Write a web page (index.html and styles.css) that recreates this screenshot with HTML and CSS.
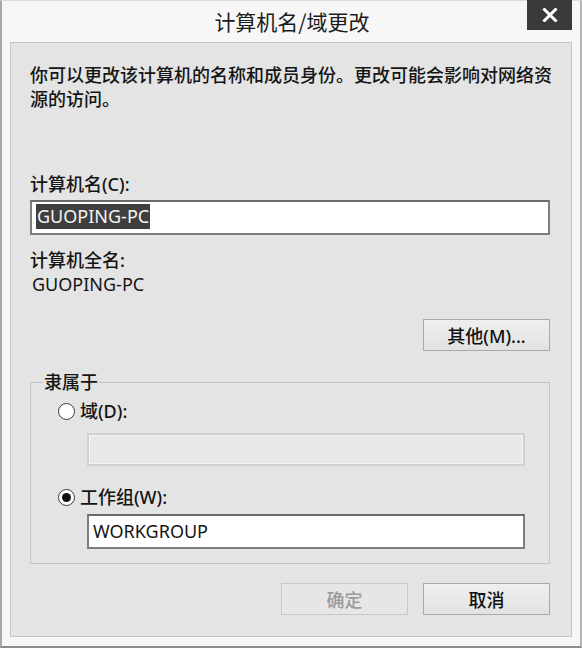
FILE: index.html
```html
<!DOCTYPE html>
<html lang="zh-CN">
<head>
<meta charset="utf-8">
<title>计算机名/域更改</title>
<link rel="stylesheet" href="styles.css">
</head>
<body>
<div class="window">
  <div class="titlebar">
    <div></div>
    <div class="title">计算机名/域更改</div>
    <div class="close"><svg width="16" height="14" viewBox="0 0 16 14"><path d="M2.5 1.5 L13.5 12.5 M13.5 1.5 L2.5 12.5" stroke="#fff" stroke-width="3" stroke-linecap="square"/></svg></div>
  </div>
  <div class="panel">
    <p class="desc"><span class="line">你可以更改该计算机的名称和成员身份。更改可能会影响对网络资</span><span class="line">源的访问。</span></p>
    <div class="label name-label">计算机名(C):</div>
    <div class="field field-main"><span class="sel">GUOPING-PC</span></div>
    <div class="label full-label">计算机全名:</div>
    <div class="value">GUOPING-PC</div>
    <div class="row-right"><div class="btn">其他(M)...</div></div>
    <fieldset class="group">
      <legend>隶属于</legend>
      <div class="radio-row"><span class="radio"></span><span>域(D):</span></div>
      <div class="field field-disabled"></div>
      <div class="radio-row radio-row2"><span class="radio checked"></span><span>工作组(W):</span></div>
      <div class="field field-wg">WORKGROUP</div>
    </fieldset>
    <div class="actions">
      <div class="btn btn-disabled">确定</div>
      <div class="btn">取消</div>
    </div>
  </div>
</div>
</body>
</html>
```
FILE: styles.css
```css
html, body {
  margin: 0;
  padding: 0;
  background: #ffffff;
}
body {
  font-family: "Noto Sans", "Noto Sans CJK SC", sans-serif;
  font-weight: 500;
  color: #151515;
}
.window {
  width: 582px;
  height: 648px;
  box-sizing: border-box;
  border-left: 2px solid #a8a8a8;
  border-right: 2px solid #b4b4b4;
  border-top: 1px solid #dcdcdc;
  border-bottom: 2px solid #8c8c8c;
  background: #f7f7f7;
  display: flex;
  flex-direction: column;
}
.titlebar {
  height: 41px;
  display: grid;
  grid-template-columns: 1fr auto 1fr;
  align-items: start;
}
.title {
  font-family: "Noto Sans CJK SC", sans-serif;
  font-size: 21px;
  font-weight: 400;
  line-height: 40px;
  color: #1c1c1c;
  padding-left: 2px;
}
.close {
  justify-self: end;
  margin-right: 8px;
  margin-top: -1px;
  width: 45px;
  height: 30px;
  background: #3a3a3a;
  display: flex;
  align-items: center;
  justify-content: center;
}
.panel {
  margin-left: 8px;
  width: 562px;
  height: 595px;
  box-sizing: border-box;
  background: #e4e4e4;
  border: 1px solid #c4c4c4;
  padding: 19px 21px 0 19px;
  font-size: 18px;
}
.desc {
  margin: 0 -10px 0 0;
  line-height: 24px;
  font-family: "Noto Sans CJK SC", sans-serif;
  font-size: 18px;
}
.desc .line {
  display: block;
  white-space: nowrap;
}
.label {
  line-height: 24px;
}
.name-label {
  margin-top: 62px;
}
.field {
  box-sizing: border-box;
  background: #ffffff;
  border: 2px solid #7d7d7d;
  border-top-color: #6a6a6a;
  font-size: 18px;
  font-weight: 400;
  line-height: 24px;
}
.field-main {
  margin-top: 4px;
  height: 35px;
  padding: 2px 4px;
}
.sel {
  background: #3e3e3e;
  color: #f4f4f4;
  display: inline-block;
  padding: 0 1px;
  line-height: 25px;
}
.full-label {
  margin-top: 13px;
}
.value {
  line-height: 24px;
  padding-left: 2px;
  font-weight: 400;
}
.row-right {
  display: flex;
  justify-content: flex-end;
  margin-top: 23px;
}
.btn {
  width: 127px;
  height: 32px;
  box-sizing: border-box;
  border: 1px solid #a9a9a9;
  background: linear-gradient(#efefef, #e2e2e2);
  display: flex;
  align-items: center;
  justify-content: center;
  font-size: 18px;
  color: #111;
}
.btn-disabled {
  border-color: #c9c9c9;
  background: #e6e6e6;
  color: #9b9b9b;
}
.group {
  margin: 20px 0 0 0;
  padding: 6px 24px 12px 28px;
  border: 1px solid #c4c4c4;
  height: 193px;
  box-sizing: border-box;
}
.group legend {
  padding: 0 1px;
  margin-left: -16px;
  line-height: 22px;
  font-size: 18px;
}
.radio-row {
  display: flex;
  align-items: center;
  gap: 5px;
  line-height: 24px;
}
.radio {
  width: 17px;
  height: 17px;
  margin-left: -1px;
  border-radius: 50%;
  box-sizing: border-box;
  border: 1.5px solid #3a3a3a;
  background: #fff;
  display: flex;
  align-items: center;
  justify-content: center;
}
.radio.checked::after {
  content: "";
  width: 9px;
  height: 9px;
  border-radius: 50%;
  background: #111;
}
.field-disabled {
  margin: 10px 0 0 28px;
  height: 33px;
  background: #e8e8e8;
  border: 2px solid #d0d0d0;
  box-shadow: inset 0 0 0 1px #f5f5f5;
}
.radio-row2 {
  margin-top: 19px;
}
.field-wg {
  margin: 5px 0 0 28px;
  height: 35px;
  padding: 3px 4px;
}
.actions {
  display: flex;
  justify-content: flex-end;
  gap: 15px;
  margin-top: 19px;
}
```
